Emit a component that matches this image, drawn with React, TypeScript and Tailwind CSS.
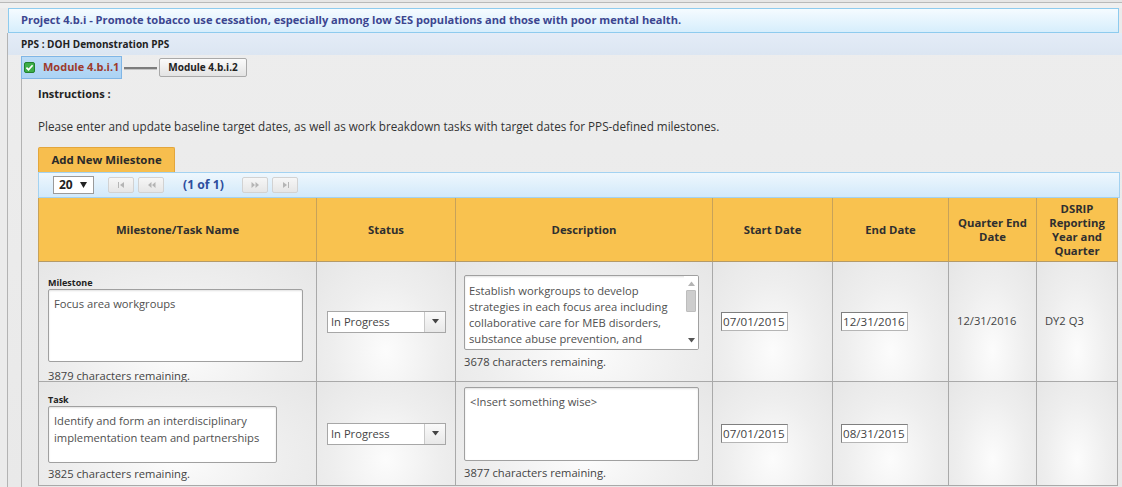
import React from "react";

const CheckBox = () => (
  <svg width="11" height="11" viewBox="0 0 11 11">
    <rect x="0.5" y="0.5" width="10" height="10" rx="1.5" fill="#3cae48" stroke="#23812f" />
    <path d="M2.4 5.6 L4.5 7.7 L8.6 3.2" stroke="#fff" strokeWidth="1.7" fill="none" />
  </svg>
);

const PagerGlyph = ({ kind }: { kind: string }) => (
  <svg width="9" height="8" viewBox="0 0 9 8" fill="#b5b5b5">
    {kind === "first" && (
      <>
        <rect x="1" y="1" width="1" height="6" />
        <path d="M7 1 L3 4 L7 7 Z" />
      </>
    )}
    {kind === "prev" && <path d="M4.5 1 L1 4 L4.5 7 Z M8.5 1 L5 4 L8.5 7 Z" />}
    {kind === "next" && <path d="M0.5 1 L4 4 L0.5 7 Z M4.5 1 L8 4 L4.5 7 Z" />}
    {kind === "last" && (
      <>
        <path d="M2 1 L6 4 L2 7 Z" />
        <rect x="7" y="1" width="1" height="6" />
      </>
    )}
  </svg>
);

const PagerButton = ({ kind }: { kind: string }) => (
  <div className="w-[26px] h-[16px] border border-[#d2d2d2] rounded-[2px] bg-gradient-to-b from-[#f6f6f6] to-[#e6e6e6] flex items-center justify-center">
    <PagerGlyph kind={kind} />
  </div>
);

const headers = [
  "Milestone/Task Name",
  "Status",
  "Description",
  "Start Date",
  "End Date",
  "Quarter End Date",
  "DSRIP Reporting Year and Quarter",
];

const cellBg =
  "bg-[radial-gradient(ellipse_at_50%_75%,#fcfcfc_0%,#eeeeee_55%,#e6e6e6_100%)] border-r border-b border-[#a9a9a9]";

const StatusSelect = () => (
  <div className="w-[119px] h-[22px] border border-[#a7a7a7] bg-white flex">
    <div className="flex-1 pl-[3px] text-[11.2px] leading-[20px] text-[#444]">In Progress</div>
    <div className="w-[21px] border-l border-[#c8c8c8] bg-gradient-to-b from-[#fafafa] to-[#e8e8e8] flex items-center justify-center">
      <svg width="7" height="5" viewBox="0 0 7 5">
        <path d="M0 0 L7 0 L3.5 4.5 Z" fill="#444" />
      </svg>
    </div>
  </div>
);

const DateInput = ({ value }: { value: string }) => (
  <div className="w-[67px] h-[19px] border border-[#7f7f7f] border-b-[#b5b5b5] border-r-[#b5b5b5] bg-white text-[11.6px] leading-[17px] text-[#444] pl-[1px] whitespace-nowrap overflow-hidden">
    {value}
  </div>
);

const TextBox = ({
  lines,
  w,
  h,
}: {
  lines: string[];
  w: string;
  h: string;
}) => (
  <div
    className={`${w} ${h} border border-[#a0a0a0] rounded-[2px] bg-white shadow-[inset_0_1px_2px_rgba(0,0,0,0.12)] px-[5px] pt-[5px] text-[11.2px] leading-[17px] text-[#505050] overflow-hidden`}
  >
    {lines.map((l) => (
      <div key={l} className="whitespace-nowrap">
        {l}
      </div>
    ))}
  </div>
);

const Remaining = ({ n }: { n: number }) => (
  <div className="text-[11.2px] leading-[14px] text-[#444] whitespace-nowrap">
    {n} characters remaining.
  </div>
);

export default function App() {
  return (
    <div className="w-[1122px] h-[487px] overflow-hidden bg-[#ebebeb] font-['Open_Sans',sans-serif] text-[#333]">
      <div className="h-[2px] bg-[#e6e6e6]" />
      <div className="h-px bg-[#b9b9b9]" />
      <div className="h-[5px] bg-[#efefef]" />

      <div className="ml-[8px] mr-[3px] h-[25px] border border-[#8ecbee] bg-gradient-to-b from-[#f5fbff] to-[#d6eefc] flex items-center pl-[12px]">
        <span className="text-[11.1px] font-bold text-[#3c4690] whitespace-nowrap">
          Project 4.b.i - Promote tobacco use cessation, especially among low SES populations and those with poor mental health.
        </span>
      </div>

      <div className="ml-[7px] border-l border-[#b3b3b3] h-[454px] bg-[linear-gradient(180deg,#ededed,#e9e9e9)]">
        <div className="h-[22px] bg-gradient-to-b from-[#e4ecf7] to-[#dce6f2] flex items-center pl-[13px]">
          <span className="text-[10px] font-bold text-[#222]">PPS : DOH Demonstration PPS</span>
        </div>

        <div className="h-[24px] flex items-start pl-[13px]">
          <div className="mt-[1px] w-[101px] h-[23px] border border-[#80b6e6] bg-gradient-to-b from-[#bcdcf7] to-[#acd3f4] flex items-center pl-[2px] gap-[8px]">
            <CheckBox />
            <span className="text-[11px] font-bold text-[#9e3a2c]">Module 4.b.i.1</span>
          </div>
          <div className="mt-[12px] ml-[2px] w-[33px] h-[3px] border-t-2 border-[#7c7c7c] border-b border-b-[#c4c4c4]" />
          <div className="mt-[3px] ml-[2px] w-[88px] h-[19px] border border-[#a9a9a9] rounded-[2px] bg-gradient-to-b from-[#fbfbfb] to-[#e3e3e3] flex items-center justify-center">
            <span className="text-[10px] font-bold text-[#222]">Module 4.b.i.2</span>
          </div>
        </div>

        <div className="ml-[13px] border-l border-[#b3b3b3] pl-[16px] h-[408px]">
          <div className="pt-[7px] text-[11px] font-bold leading-[16px] text-[#222]">Instructions :</div>
          <div className="mt-[16px] text-[11.7px] leading-[16px] text-[#333] whitespace-nowrap">
            Please enter and update baseline target dates, as well as work breakdown tasks with target dates for PPS-defined milestones.
          </div>

          <div className="mt-[13px] w-[137px] h-[25px] bg-[#f7be4e] border border-b-0 border-[#e3a63c] rounded-t-[2px] flex items-center justify-center">
            <span className="text-[11.4px] font-bold text-[#2a2a2a]">Add New Milestone</span>
          </div>

          <div className="mr-[2px] h-[26px] border border-[#a3d2f1] bg-gradient-to-b from-[#eef7fd] to-[#d2e9fa] flex items-center pl-[14px]">
            <div className="w-[41px] h-[18px] border border-[#9a9a9a] bg-white flex items-center pl-[5px] gap-[7px]">
              <span className="text-[12px] font-bold text-[#222] leading-none">20</span>
              <svg width="7" height="6" viewBox="0 0 7 6">
                <path d="M0 0 L7 0 L3.5 6 Z" fill="#222" />
              </svg>
            </div>
            <div className="ml-[14px] flex gap-[4px]">
              <PagerButton kind="first" />
              <PagerButton kind="prev" />
            </div>
            <span className="ml-[19px] w-[59px] text-[12.2px] font-bold text-[#2d4e9e]">(1 of 1)</span>
            <div className="flex gap-[4px]">
              <PagerButton kind="next" />
              <PagerButton kind="last" />
            </div>
          </div>

          <div className="w-[1080px] grid grid-cols-[279px_139px_257px_120px_116px_88px_81px]">
            {headers.map((h, i) => (
              <div
                key={h}
                className={`h-[64px] bg-[#f9c24f] border-r border-b border-[#c7a25a] border-b-[#b49a68] ${
                  i === 0 ? "border-l" : ""
                } flex items-center justify-center text-center px-[4px] text-[11.3px] leading-[14px] font-bold text-[#2f2f2f]`}
              >
                {h}
              </div>
            ))}

            {/* milestone row */}
            <div className={`${cellBg} border-l h-[120px] pl-[9px] pt-[15px]`}>
              <div className="text-[9px] font-bold leading-[12px] text-[#222]">Milestone</div>
              <TextBox lines={["Focus area workgroups"]} w="w-[255px]" h="h-[73px]" />
              <div className="mt-[7px]">
                <Remaining n={3879} />
              </div>
            </div>
            <div className={`${cellBg} h-[120px] flex items-center pl-[10px]`}>
              <StatusSelect />
            </div>
            <div className={`${cellBg} h-[120px] flex flex-col justify-center pl-[8px]`}>
              <div className="relative w-[235px] h-[75px] border border-[#a0a0a0] rounded-[2px] bg-white shadow-[inset_0_1px_2px_rgba(0,0,0,0.12)] pl-[4px] pt-[7px] text-[11.2px] leading-[16px] text-[#505050] overflow-hidden">
                <div className="whitespace-nowrap">Establish workgroups to develop</div>
                <div className="whitespace-nowrap">strategies in each focus area including</div>
                <div className="whitespace-nowrap">collaborative care for MEB disorders,</div>
                <div className="whitespace-nowrap">substance abuse prevention, and</div>
                <div className="absolute right-0 top-0 w-[14px] h-full bg-white flex flex-col items-center">
                  <svg width="7" height="5" viewBox="0 0 7 5" className="mt-[5px]">
                    <path d="M0 5 L7 5 L3.5 0.5 Z" fill="#b4b4b4" />
                  </svg>
                  <div className="mt-[4px] w-[10px] h-[22px] bg-[#cdcdcd] border border-[#bdbdbd] rounded-[1px]" />
                  <svg width="7" height="5" viewBox="0 0 7 5" className="mt-auto mb-[6px]">
                    <path d="M0 0 L7 0 L3.5 4.5 Z" fill="#555" />
                  </svg>
                </div>
              </div>
              <div className="mt-[5px]">
                <Remaining n={3678} />
              </div>
            </div>
            <div className={`${cellBg} h-[120px] flex items-center pl-[8px]`}>
              <DateInput value="07/01/2015" />
            </div>
            <div className={`${cellBg} h-[120px] flex items-center pl-[8px]`}>
              <DateInput value="12/31/2016" />
            </div>
            <div className={`${cellBg} h-[120px] flex items-center pl-[8px] text-[11.2px] text-[#444]`}>
              12/31/2016
            </div>
            <div className={`${cellBg} h-[120px] flex items-center pl-[8px] text-[11.2px] text-[#444]`}>
              DY2 Q3
            </div>

            {/* task row */}
            <div className={`${cellBg} border-l h-[104px] pl-[9px] pt-[12px]`}>
              <div className="text-[9px] font-bold leading-[12px] text-[#222]">Task</div>
              <TextBox
                lines={["Identify and form an interdisciplinary", "implementation team and partnerships"]}
                w="w-[229px]"
                h="h-[57px]"
              />
              <div className="mt-[4px]">
                <Remaining n={3825} />
              </div>
            </div>
            <div className={`${cellBg} h-[104px] flex items-center pl-[10px]`}>
              <StatusSelect />
            </div>
            <div className={`${cellBg} h-[104px] flex flex-col justify-center pl-[8px]`}>
              <TextBox lines={["<Insert something wise>"]} w="w-[235px]" h="h-[74px]" />
              <div className="mt-[5px]">
                <Remaining n={3877} />
              </div>
            </div>
            <div className={`${cellBg} h-[104px] flex items-center pl-[8px]`}>
              <DateInput value="07/01/2015" />
            </div>
            <div className={`${cellBg} h-[104px] flex items-center pl-[8px]`}>
              <DateInput value="08/31/2015" />
            </div>
            <div className={`${cellBg} h-[104px]`} />
            <div className={`${cellBg} h-[104px]`} />
          </div>
        </div>
      </div>
    </div>
  );
}
